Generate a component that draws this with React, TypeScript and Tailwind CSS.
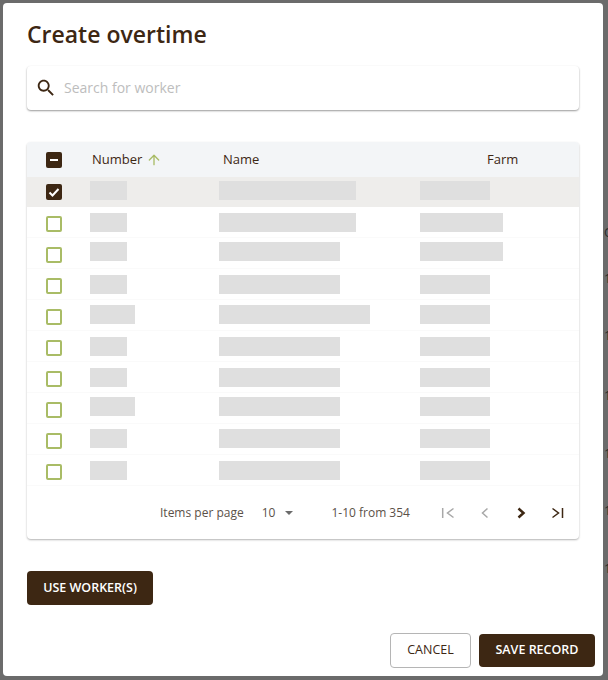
import React from 'react';
import { ArrowUp } from 'lucide-react';

const rows = [
  { number: 'w-[37px]', name: 'w-[137px]', farm: 'w-[70px]', bar: 'mt-[4px]', box: 'mt-[7px]' },
  { number: 'w-[37px]', name: 'w-[137px]', farm: 'w-[83px]', bar: 'mt-[6px]', box: 'mt-[9px]' },
  { number: 'w-[37px]', name: 'w-[121px]', farm: 'w-[83px]', bar: 'mt-[4px]', box: 'mt-[9px]' },
  { number: 'w-[37px]', name: 'w-[121px]', farm: 'w-[70px]', bar: 'mt-[6px]', box: 'mt-[9px]' },
  { number: 'w-[45px]', name: 'w-[151px]', farm: 'w-[70px]', bar: 'mt-[5px]', box: 'mt-[9px]' },
  { number: 'w-[37px]', name: 'w-[121px]', farm: 'w-[70px]', bar: 'mt-[6px]', box: 'mt-[9px]' },
  { number: 'w-[37px]', name: 'w-[121px]', farm: 'w-[70px]', bar: 'mt-[6px]', box: 'mt-[9px]' },
  { number: 'w-[45px]', name: 'w-[121px]', farm: 'w-[70px]', bar: 'mt-[4px]', box: 'mt-[9px]' },
  { number: 'w-[37px]', name: 'w-[121px]', farm: 'w-[70px]', bar: 'mt-[5px]', box: 'mt-[9px]' },
  { number: 'w-[37px]', name: 'w-[121px]', farm: 'w-[70px]', bar: 'mt-[6px]', box: 'mt-[9px]' },
];

const peeks = [
  { text: 'O', place: 'top-[223px]' },
  { text: '1', place: 'top-[269px]' },
  { text: '1', place: 'top-[326px]' },
  { text: '1', place: 'top-[386px]' },
  { text: '1', place: 'top-[444px]' },
  { text: '1', place: 'top-[501px]' },
  { text: '1', place: 'top-[559px]' },
];

const Bar = ({ className }: { className: string }) => <div className={`h-[19px] bg-[#dfdfdf] ${className}`} />;

const Box = ({ state }: { state: 'none' | 'some' | 'all' }) => {
  if (state === 'none') return <div className="h-4 w-4 rounded-[2px] border-2 border-[#a9bc66]" />;
  return (
    <div className="flex h-4 w-4 items-center justify-center rounded-[2px] bg-[#3d2713]">
      {state === 'some' ? (
        <div className="h-[2px] w-2 bg-white" />
      ) : (
        <svg viewBox="0 0 16 16" className="h-4 w-4" fill="none" stroke="#fff" strokeWidth="2">
          <path d="M3.5 8.5l3 3 6-6.5" />
        </svg>
      )}
    </div>
  );
};

const PageIcon = ({ d, className }: { d: string; className: string }) => (
  <svg viewBox="0 0 16 16" className={`mt-[1px] h-4 w-4 ${className}`} fill="none" stroke="currentColor" strokeWidth="1.5">
    <path d={d} />
  </svg>
);

export default function App() {
  return (
    <div className="relative h-[680px] w-[608px] overflow-hidden bg-[#6b6b6b] p-[3px] font-['Open_Sans',sans-serif] text-[#3d2713]">
      {peeks.map((peek, i) => (
        <span key={i} className={`absolute left-[604px] text-[13px] leading-[18px] text-[#2a2a2a] ${peek.place}`}>
          {peek.text}
        </span>
      ))}
      <div className="relative flex h-[673px] w-[600px] flex-col rounded bg-white px-6">
        <h1 className="mt-[15px] text-[23px] leading-8 font-semibold">Create overtime</h1>

        <div className="mt-[16px] flex h-[44px] w-[552px] items-center rounded bg-white pl-[8px] shadow-[0_1px_2px_rgba(0,0,0,0.4)]">
          <svg viewBox="0 0 24 24" className="h-[22px] w-[22px]" fill="#3d2713">
            <path d="M15.5 14h-.79l-.28-.27C15.41 12.59 16 11.11 16 9.5 16 5.91 13.09 3 9.5 3S3 5.91 3 9.5 5.91 16 9.5 16c1.61 0 3.09-.59 4.23-1.57l.27.28v.79l5 4.99L20.49 19l-4.99-5zm-6 0C7.01 14 5 11.99 5 9.5S7.01 5 9.5 5 14 7.01 14 9.5 11.99 14 9.5 14z" />
          </svg>
          <span className="ml-[7px] -mt-[2px] text-[14px] text-[#bdbdbd]">Search for worker</span>
        </div>

        <div className="mt-[32px] w-[552px] rounded bg-white shadow-[0_1px_2px_rgba(0,0,0,0.3)]">
          <div className="flex h-[35px] items-center rounded-t bg-[#f3f5f7] text-[13px] font-medium">
            <div className="w-[65px] pl-[19px]"><Box state="some" /></div>
            <div className="flex w-[131px] items-center">
              Number
              <ArrowUp className="ml-[4px] h-4 w-4 text-[#a9bc66]" strokeWidth={2} />
            </div>
            <div className="w-[265px]">Name</div>
            <div className="-ml-[1px]">Farm</div>
          </div>
          {rows.map((row, i) => (
            <div
              key={i}
              className={`flex items-start ${i === 0 ? 'h-[30px] bg-[#eeedeb]' : 'h-[31px] border-b border-[#fafafa]'}`}
            >
              <div className={`w-[63px] pl-[19px] ${row.box}`}><Box state={i === 0 ? 'all' : 'none'} /></div>
              <div className={`flex items-start ${row.bar}`}>
                <div className="w-[129px]"><Bar className={row.number} /></div>
                <div className="w-[201px]"><Bar className={row.name} /></div>
                <Bar className={row.farm} />
              </div>
            </div>
          ))}
          <div className="flex h-[53px] items-center pl-[133px] text-[12px] text-[#5b5148]">
            <span>Items per page</span>
            <span className="ml-[18px]">10</span>
            <div className="ml-[10px] h-0 w-0 border-x-[4px] border-t-[4px] border-x-transparent border-t-[#6b6b6b]" />
            <span className="ml-[38px]">1-10 from 354</span>
            <PageIcon className="ml-[30px] text-[#a8a8a8]" d="M2.7 3v10M13.5 3.5L7.5 8l6 4.5" />
            <PageIcon className="ml-[21px] text-[#a8a8a8]" d="M10.5 3.5L5.5 8l5 4.5" />
            <PageIcon className="ml-[20px] text-[#3d2713] [stroke-width:2.5]" d="M5.5 3.5L10.5 8l-5 4.5" />
            <PageIcon className="ml-[21px] text-[#3d2713]" d="M2.5 3.5L8.5 8l-6 4.5M12.5 3v10" />
          </div>
        </div>

        <button className="mt-[32px] h-[34px] w-[126px] rounded bg-[#3d2713] text-[12.5px] font-semibold text-white">
          USE WORKER(S)
        </button>

        <div className="mt-[28px] -mr-4 flex justify-end gap-[8px]">
          <button className="h-[35px] w-[81px] rounded border border-[#b5b5b5] bg-white text-[12.5px] font-medium">
            CANCEL
          </button>
          <button className="h-[33px] w-[116px] self-center rounded bg-[#3d2713] text-[12.5px] font-semibold text-white">
            SAVE RECORD
          </button>
        </div>
      </div>
    </div>
  );
}
